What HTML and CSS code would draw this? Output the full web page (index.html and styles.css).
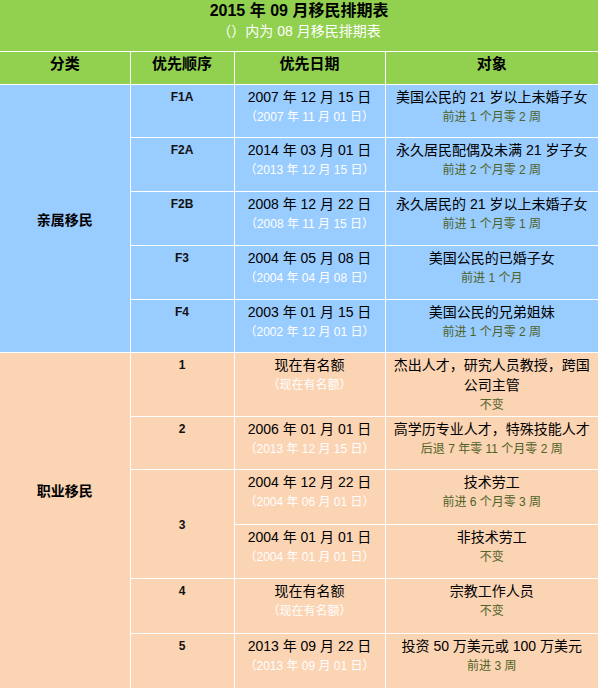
FILE: index.html
```html
<!DOCTYPE html>
<html lang="zh-CN">
<head>
<meta charset="utf-8">
<title>2015 年 09 月移民排期表</title>
<link rel="stylesheet" href="styles.css">
</head>
<body>
<table class="visa">
  <colgroup>
    <col class="c-cat">
    <col class="c-pri">
    <col class="c-date">
    <col class="c-obj">
  </colgroup>
  <thead>
    <tr class="r-title">
      <td colspan="4" class="title">
        <div class="title-main">2015 年 09 月移民排期表</div>
        <div class="title-sub">（）内为 08 月移民排期表</div>
      </td>
    </tr>
    <tr class="r-head">
      <th>分类</th>
      <th>优先顺序</th>
      <th>优先日期</th>
      <th>对象</th>
    </tr>
  </thead>
  <tbody class="family">
    <tr class="h53">
      <td rowspan="5" class="cat">亲属移民</td>
      <td class="pri">F1A</td>
      <td class="date"><div>2007 年 12 月 15 日</div><div class="old">（2007 年 11 月 01 日）</div></td>
      <td class="obj"><div>美国公民的 21 岁以上未婚子女</div><div class="chg">前进 1 个月零 2 周</div></td>
    </tr>
    <tr class="h54">
      <td class="pri">F2A</td>
      <td class="date"><div>2014 年 03 月 01 日</div><div class="old">（2013 年 12 月 15 日）</div></td>
      <td class="obj"><div>永久居民配偶及未满 21 岁子女</div><div class="chg">前进 2 个月零 2 周</div></td>
    </tr>
    <tr class="h54">
      <td class="pri">F2B</td>
      <td class="date"><div>2008 年 12 月 22 日</div><div class="old">（2008 年 11 月 15 日）</div></td>
      <td class="obj"><div>永久居民的 21 岁以上未婚子女</div><div class="chg">前进 1 个月零 1 周</div></td>
    </tr>
    <tr class="h54">
      <td class="pri">F3</td>
      <td class="date"><div>2004 年 05 月 08 日</div><div class="old">（2004 年 04 月 08 日）</div></td>
      <td class="obj"><div>美国公民的已婚子女</div><div class="chg">前进 1 个月</div></td>
    </tr>
    <tr class="h53">
      <td class="pri">F4</td>
      <td class="date"><div>2003 年 01 月 15 日</div><div class="old">（2002 年 12 月 01 日）</div></td>
      <td class="obj"><div>美国公民的兄弟姐妹</div><div class="chg">前进 1 个月零 2 周</div></td>
    </tr>
  </tbody>
  <tbody class="work">
    <tr class="h64">
      <td rowspan="6" class="cat cat-work">职业移民</td>
      <td class="pri">1</td>
      <td class="date"><div>现在有名额</div><div class="old">（现在有名额）</div></td>
      <td class="obj"><div>杰出人才，研究人员教授，跨国公司主管</div><div class="chg">不变</div></td>
    </tr>
    <tr class="h53">
      <td class="pri">2</td>
      <td class="date"><div>2006 年 01 月 01 日</div><div class="old">（2013 年 12 月 15 日）</div></td>
      <td class="obj"><div>高学历专业人才，特殊技能人才</div><div class="chg">后退 7 年零 11 个月零 2 周</div></td>
    </tr>
    <tr class="h55">
      <td rowspan="2" class="pri pri-mid">3</td>
      <td class="date"><div>2004 年 12 月 22 日</div><div class="old">（2004 年 06 月 01 日）</div></td>
      <td class="obj"><div>技术劳工</div><div class="chg">前进 6 个月零 3 周</div></td>
    </tr>
    <tr class="h54">
      <td class="date"><div>2004 年 01 月 01 日</div><div class="old">（2004 年 01 月 01 日）</div></td>
      <td class="obj"><div>非技术劳工</div><div class="chg">不变</div></td>
    </tr>
    <tr class="h55">
      <td class="pri">4</td>
      <td class="date"><div>现在有名额</div><div class="old">（现在有名额）</div></td>
      <td class="obj"><div>宗教工作人员</div><div class="chg">不变</div></td>
    </tr>
    <tr class="h60">
      <td class="pri">5</td>
      <td class="date"><div>2013 年 09 月 22 日</div><div class="old">（2013 年 09 月 01 日）</div></td>
      <td class="obj"><div>投资 50 万美元或 100 万美元</div><div class="chg">前进 3 周</div></td>
    </tr>
  </tbody>
</table>
</body>
</html>
```

FILE: styles.css
```css
html, body {
  margin: 0;
  padding: 0;
  background: #ffffff;
}

body {
  font-family: "Liberation Sans", "Noto Sans CJK SC", sans-serif;
  font-size: 14px;
  color: #000000;
}

.visa {
  width: 598px;
  border-collapse: collapse;
  border-style: hidden;
  table-layout: fixed;
}

.c-cat { width: 130px; }
.c-pri { width: 104px; }
.c-date { width: 151px; }
.c-obj { width: 213px; }

.visa td,
.visa th {
  border: 1px solid #ffffff;
  padding: 2px 3px 0;
  line-height: 20px;
  text-align: center;
  vertical-align: top;
}

.r-title .title {
  background: #92d050;
  height: 51px;
  padding: 0;
  border-top: none;
}

.title-main {
  font-size: 16px;
  font-weight: bold;
  line-height: 21px;
  color: #000000;
}

.title-sub {
  font-size: 14px;
  line-height: 21px;
  color: #ffffff;
}

.r-head th {
  background: #92d050;
  height: 33px;
  padding-top: 2px;
  font-size: 15px;
  font-weight: bold;
  box-sizing: border-box;
}

.family td { background: #99ccff; }
.work td { background: #fbd4b4; }

.h53 { height: 53px; }
.h54 { height: 54px; }
.h55 { height: 55px; }
.h60 { height: 60px; }
.h64 { height: 64px; }

.cat {
  vertical-align: middle !important;
  font-size: 14px;
  font-weight: bold;
}

.cat-work {
  padding-bottom: 66px !important;
}

.pri {
  font-size: 12px;
  font-weight: bold;
  color: #111111;
}

.pri-mid {
  vertical-align: middle !important;
}

.date .old {
  font-size: 12px;
  color: #ffffff;
  line-height: 20px;
}

.obj .chg {
  font-size: 12px;
  color: #4f6228;
}
```
